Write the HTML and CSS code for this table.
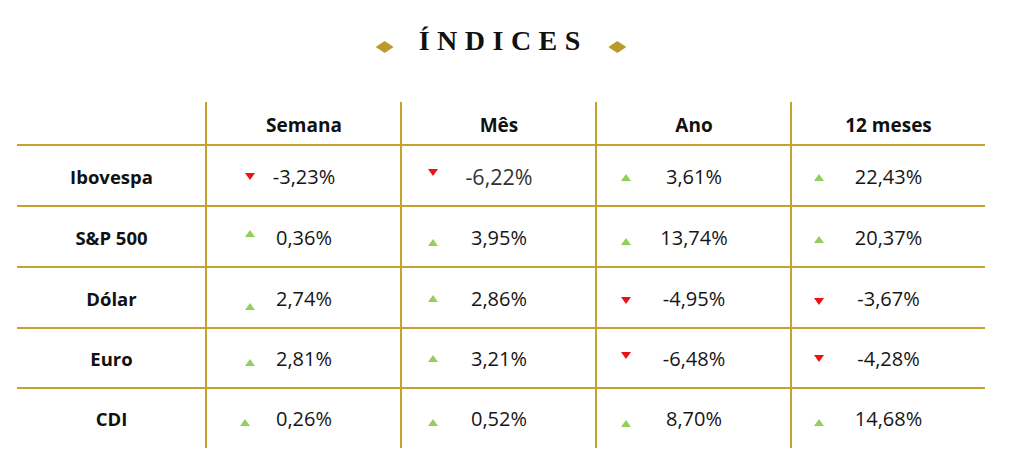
FILE: index.html
```html
<!DOCTYPE html>
<html lang="pt-BR">
<head>
<meta charset="utf-8">
<title>Índices</title>
<link rel="stylesheet" href="styles.css">
</head>
<body>
<div class="wrap">
  <header class="title">
    <span class="diamond left"></span>
    <h1 class="title-text">ÍNDICES</h1>
    <span class="diamond right"></span>
  </header>
  <div class="table">
    <div class="cell head label"></div>
    <div class="cell head">Semana</div>
    <div class="cell head">Mês</div>
    <div class="cell head">Ano</div>
    <div class="cell head">12 meses</div>

    <div class="cell label row">Ibovespa</div>
    <div class="cell val row c1"><i class="arrow down"></i><span class="num">-3,23%</span></div>
    <div class="cell val row c2"><i class="arrow down dy-n3"></i><span class="num big">-6,22%</span></div>
    <div class="cell val row c3"><i class="arrow up dy-p1"></i><span class="num">3,61%</span></div>
    <div class="cell val row c4"><i class="arrow up dy-p1"></i><span class="num">22,43%</span></div>

    <div class="cell label row">S&amp;P 500</div>
    <div class="cell val row c1"><i class="arrow up dy-n3"></i><span class="num">0,36%</span></div>
    <div class="cell val row c2"><i class="arrow up dy-p5"></i><span class="num">3,95%</span></div>
    <div class="cell val row c3"><i class="arrow up dy-p4"></i><span class="num">13,74%</span></div>
    <div class="cell val row c4"><i class="arrow up dy-p2"></i><span class="num">20,37%</span></div>

    <div class="cell label row">Dólar</div>
    <div class="cell val row c1"><i class="arrow up dy-p8"></i><span class="num">2,74%</span></div>
    <div class="cell val row c2"><i class="arrow up"></i><span class="num">2,86%</span></div>
    <div class="cell val row c3"><i class="arrow down dy-p2"></i><span class="num">-4,95%</span></div>
    <div class="cell val row c4"><i class="arrow down dy-p3"></i><span class="num">-3,67%</span></div>

    <div class="cell label row">Euro</div>
    <div class="cell val row c1"><i class="arrow up dy-p3"></i><span class="num">2,81%</span></div>
    <div class="cell val row c2"><i class="arrow up"></i><span class="num">3,21%</span></div>
    <div class="cell val row c3"><i class="arrow down dy-n3"></i><span class="num">-6,48%</span></div>
    <div class="cell val row c4"><i class="arrow down"></i><span class="num">-4,28%</span></div>

    <div class="cell label row">CDI</div>
    <div class="cell val row c1 near"><i class="arrow up dy-p3"></i><span class="num">0,26%</span></div>
    <div class="cell val row c2"><i class="arrow up dy-p3"></i><span class="num">0,52%</span></div>
    <div class="cell val row c3"><i class="arrow up dy-p5"></i><span class="num">8,70%</span></div>
    <div class="cell val row c4"><i class="arrow up dy-p4"></i><span class="num">14,68%</span></div>
  </div>
</div>
</body>
</html>
```

FILE: styles.css
```css
* { box-sizing: border-box; }

html, body {
  margin: 0;
  padding: 0;
  background: #ffffff;
}

body {
  font-family: "Open Sans", "Liberation Sans", sans-serif;
  color: #111111;
}

.wrap {
  width: 968px;
  margin-left: 17px;
}

.title {
  height: 102px;
  padding-top: 25px;
  display: flex;
  justify-content: center;
  align-items: flex-start;
}

.title-text {
  margin: 0 -7.5px 0 0;
  font-family: "Liberation Serif", "Times New Roman", serif;
  font-weight: 700;
  font-size: 28px;
  line-height: 32px;
  letter-spacing: 7.5px;
  color: #111111;
}

.diamond {
  width: 18px;
  height: 12px;
  margin-top: 16px;
  background: #b99a2b;
  clip-path: polygon(50% 0, 100% 50%, 50% 100%, 0 50%);
}

.diamond.left { margin-right: 25px; }
.diamond.right { margin-left: 28px; }

.table {
  display: grid;
  grid-template-columns: 189px 195px 195px 195px 194px;
  grid-template-rows: 43px 61px 61px 61px 60px 60px;
}

.cell {
  display: grid;
  align-items: center;
  justify-items: center;
  border-left: 2px solid #c4a32c;
  margin-left: -1px;
}

.cell.label {
  border-left: none;
  margin-left: 0;
  font-weight: 700;
  font-size: 18.5px;
}

.cell.row {
  border-top: 2px solid #c4a32c;
  margin-top: -1px;
}

.cell.head {
  font-weight: 700;
  font-size: 19px;
  padding-top: 2px;
}

.val > * {
  grid-area: 1 / 1;
}

.num {
  font-size: 20px;
  line-height: 27px;
  color: #151515;
}

.num.big {
  font-size: 21.5px;
  color: #333333;
}

.arrow {
  justify-self: start;
  width: 0;
  height: 0;
  border-left: 5.5px solid transparent;
  border-right: 5.5px solid transparent;
}

.arrow.up { border-bottom: 7px solid #92cf5c; }
.arrow.down { border-top: 7px solid #ee1111; }

.c1 .arrow { margin-left: 38px; }
.c2 .arrow { margin-left: 26px; }
.c3 .arrow { margin-left: 24px; }
.c4 .arrow { margin-left: 22px; }
.c1.near .arrow { margin-left: 33px; }

.dy-n3 { margin-top: -7px; }
.dy-p1 { margin-top: 2px; }
.dy-p2 { margin-top: 4px; }
.dy-p3 { margin-top: 7px; }
.dy-p4 { margin-top: 8px; }
.dy-p5 { margin-top: 10px; }
.dy-p8 { margin-top: 17px; }
```
